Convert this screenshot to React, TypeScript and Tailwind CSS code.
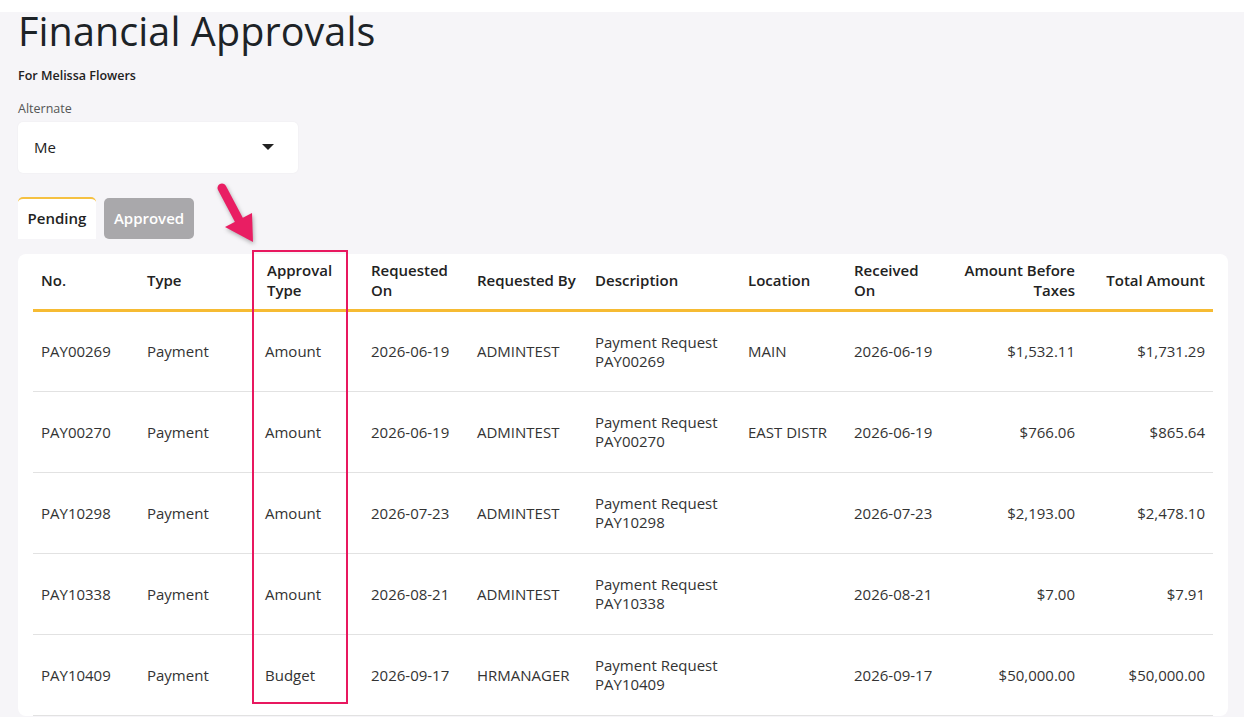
import React from "react";

type Row = {
  no: string;
  type: string;
  approval: string;
  requestedOn: string;
  requestedBy: string;
  description: string;
  location: string;
  receivedOn: string;
  beforeTaxes: string;
  total: string;
};

const rows: Row[] = [
  { no: "PAY00269", type: "Payment", approval: "Amount", requestedOn: "2026-06-19", requestedBy: "ADMINTEST", description: "PAY00269", location: "MAIN", receivedOn: "2026-06-19", beforeTaxes: "$1,532.11", total: "$1,731.29" },
  { no: "PAY00270", type: "Payment", approval: "Amount", requestedOn: "2026-06-19", requestedBy: "ADMINTEST", description: "PAY00270", location: "EAST DISTR", receivedOn: "2026-06-19", beforeTaxes: "$766.06", total: "$865.64" },
  { no: "PAY10298", type: "Payment", approval: "Amount", requestedOn: "2026-07-23", requestedBy: "ADMINTEST", description: "PAY10298", location: "", receivedOn: "2026-07-23", beforeTaxes: "$2,193.00", total: "$2,478.10" },
  { no: "PAY10338", type: "Payment", approval: "Amount", requestedOn: "2026-08-21", requestedBy: "ADMINTEST", description: "PAY10338", location: "", receivedOn: "2026-08-21", beforeTaxes: "$7.00", total: "$7.91" },
  { no: "PAY10409", type: "Payment", approval: "Budget", requestedOn: "2026-09-17", requestedBy: "HRMANAGER", description: "PAY10409", location: "", receivedOn: "2026-09-17", beforeTaxes: "$50,000.00", total: "$50,000.00" },
];

const cols = [106, 120, 104, 106, 118, 153, 106, 108, 129, 130];

function Arrow() {
  return (
    <svg
      className="absolute left-[201px] top-[174px] drop-shadow-[1px_2px_2px_rgba(0,0,0,0.3)]"
      width="70"
      height="80"
      viewBox="0 0 70 80"
    >
      <line x1="21" y1="14" x2="39" y2="48" stroke="#e91e63" strokeWidth="9" strokeLinecap="round" />
      <polygon points="24,53 51,39 52,68" fill="#e91e63" />
    </svg>
  );
}

export default function App() {
  return (
    <div
      className="relative min-h-[717px] bg-[#f6f5f8] text-[#333] overflow-hidden"
      style={{ fontFamily: '"Open Sans", "Noto Sans", sans-serif' }}
    >
      <div className="h-3 bg-white" />

      <div className="px-[18px]">
        {/* Header */}
        <h1 className="text-[39.5px] leading-[40px] text-[#1d2327] mt-[-1px] tracking-[0.1px]">Financial Approvals</h1>
        <div className="mt-[16px] text-[12.5px] font-semibold text-[#222]">For Melissa Flowers</div>

        <div className="mt-[14px] text-[12.5px] text-[#555]">Alternate</div>
        <div className="mt-[3px] w-[280px] h-[51px] bg-white rounded-[5px] shadow-[0_0_2px_rgba(0,0,0,0.05)] flex items-center justify-between pl-4 pr-6">
          <span className="text-[15px] text-[#222]">Me</span>
          <svg width="12" height="7" viewBox="0 0 12 7">
            <polygon points="0,0 12,0 6,6" fill="#222" />
          </svg>
        </div>

        {/* Tabs */}
        <div className="mt-[24px] flex gap-2 items-end">
          <div className="h-[42px] w-[78px] bg-white rounded-t-[5px] border-t-2 border-[#f5c142] flex items-center justify-center text-[15px] font-semibold text-[#222]">
            Pending
          </div>
          <div className="h-[41px] w-[90px] bg-[#a9a8ab] rounded-[5px] flex items-center justify-center text-[15px] font-semibold text-white">
            Approved
          </div>
        </div>

        {/* Table card */}
        <div className="mt-[15px] bg-white rounded-[8px] px-[15px] w-[1210px]">
          <table className="table-fixed w-[1180px] border-collapse text-[15px]">
            <colgroup>
              {cols.map((w, i) => (
                <col key={i} style={{ width: w }} />
              ))}
            </colgroup>
            <thead>
              <tr className="h-[57px] border-b-[3px] border-[#f6bb33] text-[#222] font-semibold leading-[20px]">
                <th className="text-left font-semibold px-2 pb-[3px]">No.</th>
                <th className="text-left font-semibold px-2 pb-[3px]">Type</th>
                <th className="text-left font-semibold px-2 pb-[3px]">Approval<br />Type</th>
                <th className="text-left font-semibold px-2 pb-[3px]">Requested<br />On</th>
                <th className="text-left font-semibold px-2 pb-[3px]">Requested By</th>
                <th className="text-left font-semibold px-2 pb-[3px]">Description</th>
                <th className="text-left font-semibold px-2 pb-[3px]">Location</th>
                <th className="text-left font-semibold px-2 pb-[3px]">Received<br />On</th>
                <th className="text-right font-semibold px-2 pb-[3px]">Amount Before<br />Taxes</th>
                <th className="text-right font-semibold px-2 pb-[3px]">Total Amount</th>
              </tr>
            </thead>
            <tbody>
              {rows.map((r) => (
                <tr key={r.no} className="h-[81px] border-b border-[#e2e2e2] leading-[19px]">
                  <td className="px-2">{r.no}</td>
                  <td className="px-2">{r.type}</td>
                  <td className="pl-[6px] pr-2">{r.approval}</td>
                  <td className="px-2">{r.requestedOn}</td>
                  <td className="px-2">{r.requestedBy}</td>
                  <td className="px-2">Payment Request<br />{r.description}</td>
                  <td className="px-2">{r.location}</td>
                  <td className="px-2">{r.receivedOn}</td>
                  <td className="px-2 text-right">{r.beforeTaxes}</td>
                  <td className="px-2 text-right">{r.total}</td>
                </tr>
              ))}
            </tbody>
          </table>
        </div>
      </div>

      {/* Annotation overlay */}
      <div className="absolute left-[252px] top-[250px] w-[96px] h-[454px] border-2 border-[#e8185f] pointer-events-none" />
      <Arrow />
    </div>
  );
}
